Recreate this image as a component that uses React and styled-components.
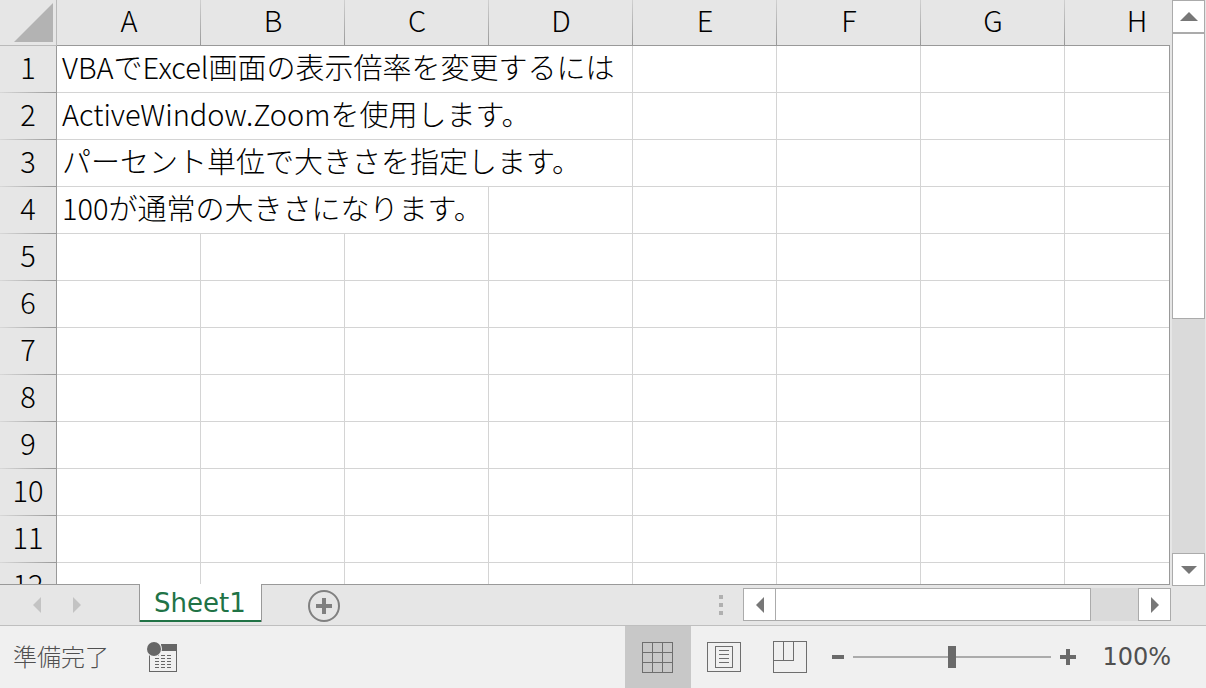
import React, { useState } from 'react';
import styled, { createGlobalStyle } from 'styled-components';

const columns = ['A', 'B', 'C', 'D', 'E', 'F', 'G', 'H'];

// long text runs over the empty cells on its right, span = how many cells it covers
const rows = [
  { text: 'VBAでExcel画面の表示倍率を変更するには', span: 4 },
  { text: 'ActiveWindow.Zoomを使用します。', span: 4 },
  { text: 'パーセント単位で大きさを指定します。', span: 4 },
  { text: '100が通常の大きさになります。', span: 3 },
  {}, {}, {}, {}, {}, {}, {}, {},
];

const Arrow = ({ dir }) => {
  const points = {
    up: '0,13 9,4 18,13',
    down: '1,5 17,5 9,13',
    left: '5,9 13,1 13,17',
    right: '5,1 13,9 5,17',
  };
  return (
    <svg width="18" height="18" viewBox="0 0 18 18" aria-hidden="true">
      <polygon points={points[dir]} fill="currentColor" />
    </svg>
  );
};

const App = () => {
  const [zoom, setZoom] = useState(100);
  const [view, setView] = useState('normal');

  return (
    <>
      <GlobalStyle />
      <Window>
        <Workspace>
          <Book>
            <Pane>
              <Sheet>
                <colgroup>
                  <RowHeadCol />
                  {columns.map((c) => <DataCol key={c} />)}
                </colgroup>
                <thead>
                  <tr>
                    <Corner>
                      <svg width="56" height="45" aria-hidden="true">
                        <polygon points="14,42 53,3 53,42" fill="#b3b3b3" />
                      </svg>
                    </Corner>
                    {columns.map((c) => <ColHead key={c} scope="col">{c}</ColHead>)}
                  </tr>
                </thead>
                <tbody>
                  {rows.map((row, i) => {
                    const span = row.span || 1;
                    return (
                      <tr key={i}>
                        <RowHead scope="row">{i + 1}</RowHead>
                        <Cell colSpan={span}>{row.text}</Cell>
                        {columns.slice(span).map((c) => <Cell key={c} />)}
                      </tr>
                    );
                  })}
                </tbody>
              </Sheet>
            </Pane>
            <TabBar>
              <TabNav>
                <NavButton aria-label="Previous sheet"><Arrow dir="left" /></NavButton>
                <NavButton aria-label="Next sheet"><Arrow dir="right" /></NavButton>
              </TabNav>
              <SheetTab>Sheet1</SheetTab>
              <AddButton aria-label="New sheet">
                <svg width="34" height="34" viewBox="0 0 34 34" aria-hidden="true">
                  <circle cx="17" cy="17" r="15" fill="none" stroke="#808080" strokeWidth="2" />
                  <path d="M9 17H25M17 9V25" stroke="#808080" strokeWidth="4" />
                </svg>
              </AddButton>
              <Grip><i /><i /><i /></Grip>
              <HScroll>
                <ScrollButton aria-label="Scroll left"><Arrow dir="left" /></ScrollButton>
                <Track>
                  <HThumb />
                </Track>
                <ScrollButton aria-label="Scroll right"><Arrow dir="right" /></ScrollButton>
              </HScroll>
            </TabBar>
          </Book>
          <VScroll>
            <ScrollButton aria-label="Scroll up"><Arrow dir="up" /></ScrollButton>
            <Track>
              <VThumb />
            </Track>
            <ScrollButton aria-label="Scroll down"><Arrow dir="down" /></ScrollButton>
          </VScroll>
        </Workspace>

        <StatusBar>
          <Ready>準備完了</Ready>
          <MacroButton aria-label="Record macro">
            <svg width="32" height="32" viewBox="0 0 32 32" shapeRendering="crispEdges" aria-hidden="true">
              <path d="M3.5 14V30.5H30.5V8" fill="none" stroke="#666" />
              <path d="M15 3H31V10H15Z" fill="#666" />
              <path
                d="M9 14.5h4m2 0h4m2 0h4M9 17.5h4m2 0h4m2 0h4M9 20.5h4m2 0h4m2 0h4M9 23.5h4m2 0h4m2 0h4M9 26.5h4m2 0h4m2 0h4"
                stroke="#666"
              />
              <circle cx="8" cy="8" r="8" fill="#f0f0f0" shapeRendering="auto" />
              <circle cx="8" cy="8" r="7" fill="#666" shapeRendering="auto" />
            </svg>
          </MacroButton>
          <Views>
            <ViewButton aria-label="Normal" $on={view === 'normal'} onClick={() => setView('normal')}>
              <ViewIcon viewBox="0 0 34 32">
                <path d="M1.5 1.5H31.5V31.5H1.5ZM11.5 1.5V31.5M21.5 1.5V31.5M1.5 11.5H31.5M1.5 21.5H31.5" />
              </ViewIcon>
            </ViewButton>
            <ViewButton aria-label="Page layout" $on={view === 'page'} onClick={() => setView('page')}>
              <ViewIcon viewBox="0 0 34 32">
                <path d="M.5 1.5H33.5V30.5H.5ZM8.5 5.5H25.5V26.5H8.5ZM12 9.5H22M12 13.5H22M12 17.5H22M12 21.5H22" />
              </ViewIcon>
            </ViewButton>
            <ViewButton aria-label="Page break preview" $on={view === 'break'} onClick={() => setView('break')}>
              <ViewIcon viewBox="0 0 34 32">
                <path d="M.5 .5H33.5V31.5H.5ZM10.5 .5V19.5M20.5 .5V19.5M.5 19.5H20.5" />
              </ViewIcon>
            </ViewButton>
          </Views>
          <ZoomButton aria-label="Zoom out" onClick={() => setZoom(Math.max(0, zoom - 10))}>
            <svg width="16" height="16" aria-hidden="true"><path d="M2 8H14" stroke="#6a6a6a" strokeWidth="4" /></svg>
          </ZoomButton>
          <Slider
            type="range"
            aria-label="Zoom"
            min="0"
            max="200"
            value={zoom}
            onChange={(e) => setZoom(Number(e.target.value))}
          />
          <ZoomButton aria-label="Zoom in" onClick={() => setZoom(Math.min(200, zoom + 10))}>
            <svg width="16" height="16" aria-hidden="true"><path d="M0 8H16M8 0V16" stroke="#6a6a6a" strokeWidth="4" /></svg>
          </ZoomButton>
          <Percent>{zoom}%</Percent>
        </StatusBar>
      </Window>
    </>
  );
};

const GlobalStyle = createGlobalStyle`
  * {
    box-sizing: border-box;
  }
  body {
    margin: 0;
    overflow: hidden;
  }
  button {
    padding: 0;
    border: none;
    background: none;
    cursor: pointer;
  }
  svg {
    display: block;
  }
`;

const Window = styled.div`
  display: flex;
  flex-direction: column;
  height: 100vh;
  background: #e6e6e6;
  font-family: "DejaVu Sans", "Noto Sans CJK JP", sans-serif;
`;

const Workspace = styled.div`
  display: flex;
  flex: 1;
  min-height: 0;
  border-bottom: 1px solid #bfbfbf;
`;

const Book = styled.div`
  display: flex;
  flex-direction: column;
  flex: 1;
  min-width: 0;
`;

const Pane = styled.div`
  position: relative;
  flex: 1;
  min-height: 0;
  margin-right: 1px;
  overflow: hidden;
  /* frame line on the right of the cells, below the column letters */
  &::after {
    content: '';
    position: absolute;
    top: 45px;
    right: 0;
    bottom: 0;
    border-right: 1px solid #999;
  }
`;

const Sheet = styled.table`
  table-layout: fixed;
  width: 1209px;
  border-collapse: separate;
  border-spacing: 0;
  color: #000;
  font-family: "Noto Sans CJK JP", sans-serif;
  font-size: 29px;
  font-weight: 300;
  line-height: 36px;
`;

const RowHeadCol = styled.col`
  width: 57px;
`;

const DataCol = styled.col`
  width: 144px;
`;

const Corner = styled.td`
  height: 46px;
  padding: 0;
  border-right: 1px solid #bababa;
  border-bottom: 1px solid #bababa;
`;

const ColHead = styled.th`
  height: 46px;
  padding: 0 0 8px;
  border-bottom: 1px solid #999;
  background: linear-gradient(#d0d0d0, #999) right / 1px 100% no-repeat;
  font-weight: 300;
`;

const RowHead = styled.th`
  height: 47px;
  padding: 0 0 8px;
  border-right: 1px solid #999;
  background: linear-gradient(to right, #d8d8d8, #999) bottom / 100% 1px no-repeat #e6e6e6;
  font-weight: 300;
`;

const Cell = styled.td`
  height: 47px;
  padding: 0 0 6px 5px;
  border-right: 1px solid #d4d4d4;
  border-bottom: 1px solid #d4d4d4;
  background: #fff;
  white-space: nowrap;
`;

const TabBar = styled.div`
  display: flex;
  align-items: flex-start;
  height: 41px;
  background: linear-gradient(#999, #999) top left / calc(100% - 1px) 1px no-repeat;
`;

const TabNav = styled.div`
  display: flex;
  padding: 0 42px 0 17px;
`;

const NavButton = styled.button`
  display: flex;
  align-items: center;
  justify-content: center;
  width: 40px;
  height: 41px;
  color: #c3c3c3;
`;

const SheetTab = styled.button`
  height: 38px;
  padding: 0 15px 0 14px;
  && {
    border: solid #999;
    border-width: 0 1px;
    background: linear-gradient(#217346, #217346) bottom / 100% 2px no-repeat border-box #fff;
  }
  color: #217346;
  font-family: inherit;
  font-size: 26px;
  line-height: 38px;
`;

const AddButton = styled.button`
  margin: 5px 0 0 45px;
`;

const Grip = styled.div`
  display: grid;
  gap: 4px;
  margin: 11px 20px 0 auto;
  i {
    width: 4px;
    height: 4px;
    background: #b0b0b0;
  }
`;

const HScroll = styled.div`
  display: flex;
  flex: 0 1 428px;
  height: 33px;
  margin-top: 4px;
`;

const VScroll = styled.div`
  display: flex;
  flex-direction: column;
  width: 35px;
  padding: 0 1px;
  margin-bottom: 39px;
`;

const ScrollButton = styled.button`
  display: flex;
  flex: none;
  align-items: center;
  justify-content: center;
  width: 33px;
  height: 33px;
  && {
    border: 1px solid #ababab;
    background: #fff;
  }
  color: #777;
`;

const Track = styled.div`
  flex: 1;
  min-height: 0;
  background: #dadada;
`;

const HThumb = styled.div`
  width: 87%;
  height: 100%;
  border: 1px solid #ababab;
  border-left: none;
  background: #fff;
`;

const VThumb = styled.div`
  height: 55%;
  border: 1px solid #ababab;
  background: #fff;
`;

const StatusBar = styled.footer`
  display: flex;
  align-items: center;
  height: 62px;
  padding: 0 35px 0 13px;
  background: #f0f0f0;
  color: #505050;
  font-size: 24px;
`;

const Ready = styled.span`
  padding-bottom: 4px;
  font-family: "Noto Sans CJK JP", sans-serif;
  font-weight: 300;
`;

const MacroButton = styled.button`
  margin-left: 37px;
`;

const Views = styled.div`
  display: flex;
  align-self: stretch;
  margin-left: auto;
`;

const ViewButton = styled.button`
  display: flex;
  align-items: center;
  justify-content: center;
  width: 66px;
  && {
    background: ${({ $on }) => ($on ? '#c8c8c8' : 'transparent')};
  }
`;

const ViewIcon = styled.svg.attrs({ 'aria-hidden': true })`
  width: 34px;
  height: 32px;
  fill: none;
  stroke: #6e6e6e;
  shape-rendering: crispEdges;
`;

const ZoomButton = styled.button`
  margin-left: 7px;
`;

const Slider = styled.input`
  appearance: none;
  width: 198px;
  height: 22px;
  margin: 0 2px 0 7px;
  background: linear-gradient(#ababab, #ababab) center / 100% 2px no-repeat;
  &::-webkit-slider-thumb {
    appearance: none;
    width: 8px;
    height: 22px;
    background: #6a6a6a;
  }
`;

const Percent = styled.span`
  margin-left: 26px;
`;

export default App;
